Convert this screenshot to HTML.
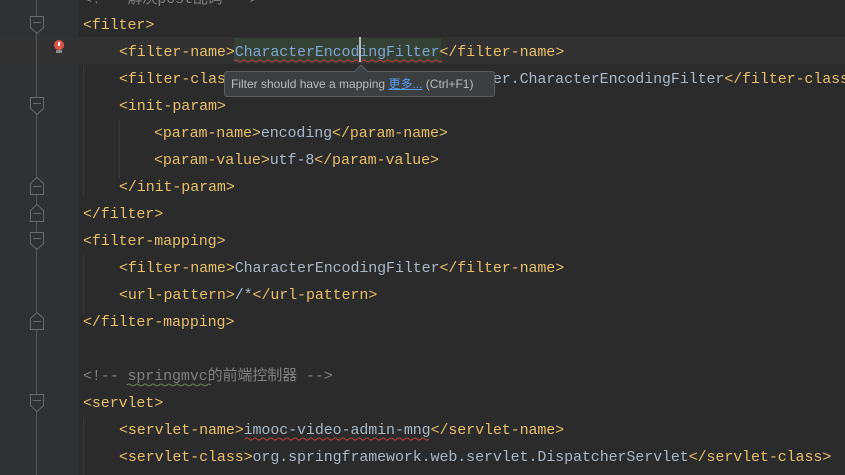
<!DOCTYPE html>
<html><head><meta charset="utf-8"><style>
body{margin:0;width:845px;height:475px;overflow:hidden;background:#2b2b2b;position:relative;font-family:"Liberation Mono","Noto Sans CJK SC",monospace;font-size:15px;letter-spacing:-0.1px;}
.gut{position:absolute;left:0;top:0;width:78px;height:475px;background:#303133;}
.cur{position:absolute;left:0;top:37px;width:845px;height:27px;background:#323232;}
.ln{position:absolute;left:0;height:27px;line-height:27px;white-space:pre;color:#e8bf6a;}
.t{color:#a9b7c6}
.c{color:#808080}
.vl{position:absolute;left:36px;top:0;width:1px;height:475px;background:#555}
.ig{position:absolute;width:1px;background:#3a3a3a}
</style></head><body>
<div class="gut"></div>
<div class="cur"></div>
<div class="vl"></div>
<div class="ig" style="left:119px;top:120px;height:58px"></div>
<div class="ig" style="left:83px;top:65px;height:130px"></div>
<div class="ig" style="left:83px;top:255px;height:60px"></div>
<div class="ig" style="left:83px;top:417px;height:58px"></div>
<svg width="845" height="475" style="position:absolute;left:0;top:0">
<g fill="#2f3032" stroke="#6a6a6a" stroke-width="1">
<path d="M30.5 16.5h13v11l-6.5 6-6.5-6z"/><line x1="33" y1="22.5" x2="41" y2="22.5"/>
<path d="M30.5 97.5h13v11l-6.5 6-6.5-6z"/><line x1="33" y1="103.5" x2="41" y2="103.5"/>
<path d="M30.5 194.5h13v-11l-6.5-6-6.5 6z"/><line x1="33" y1="186.5" x2="41" y2="186.5"/>
<path d="M30.5 221.5h13v-11l-6.5-6-6.5 6z"/><line x1="33" y1="213.5" x2="41" y2="213.5"/>
<path d="M30.5 232.5h13v11l-6.5 6-6.5-6z"/><line x1="33" y1="238.5" x2="41" y2="238.5"/>
<path d="M30.5 329.5h13v-11l-6.5-6-6.5 6z"/><line x1="33" y1="321.5" x2="41" y2="321.5"/>
<path d="M30.5 394.5h13v11l-6.5 6-6.5-6z"/><line x1="33" y1="400.5" x2="41" y2="400.5"/>
</g>
<circle cx="59" cy="45" r="5" fill="#e0554a"/><rect x="58" y="42" width="2" height="4" fill="#fff"/>
<rect x="56" y="50" width="6" height="3" fill="#888"/>
<rect x="234" y="38" width="207" height="24" fill="#344134"/>
<path d="M234 61q2-2 4 0t4 0t4 0t4 0t4 0t4 0t4 0t4 0t4 0t4 0t4 0t4 0t4 0t4 0t4 0t4 0t4 0t4 0t4 0t4 0t4 0t4 0t4 0t4 0t4 0t4 0t4 0t4 0t4 0t4 0t4 0t4 0t4 0t4 0t4 0t4 0t4 0t4 0t4 0t4 0t4 0t4 0t4 0t4 0t4 0t4 0t4 0t4 0t4 0t4 0t4 0t4 0" stroke="#bc3f3c" fill="none"/>
<path d="M127 385q2-2 4 0t4 0t4 0t4 0t4 0t4 0t4 0t4 0t4 0t4 0t4 0t4 0t4 0t4 0t4 0t4 0t4 0t4 0t4 0t4 0t4 0" stroke="#6a8759" fill="none"/>
<path d="M245 439q2-2 4 0t4 0t4 0t4 0t4 0t4 0t4 0t4 0t4 0t4 0t4 0t4 0t4 0t4 0t4 0t4 0t4 0t4 0t4 0t4 0t4 0t4 0t4 0t4 0t4 0t4 0t4 0t4 0t4 0t4 0t4 0t4 0t4 0t4 0t4 0t4 0t4 0t4 0t4 0t4 0t4 0t4 0t4 0t4 0t4 0t4 0" stroke="#bc3f3c" fill="none"/>
<rect x="359" y="37" width="2" height="25" fill="#bbb"/>
</svg>
<div class="ln c" style="top:-14px;left:83px">&lt;!-- 解决post乱码 --&gt;</div>
<div class="ln" style="top:12px;left:83px">&lt;filter&gt;</div>
<div class="ln" style="top:39px;left:119px">&lt;filter-name&gt;<span style="color:#7fa6d0">CharacterEncodingFilter</span>&lt;/filter-name&gt;</div>
<div class="ln" style="top:66px;left:119px">&lt;filter-class&gt;<span class="t">org.springframework.web.filter.CharacterEncodingFilter</span>&lt;/filter-class&gt;</div>
<div class="ln" style="top:93px;left:119px">&lt;init-param&gt;</div>
<div class="ln" style="top:120px;left:154px">&lt;param-name&gt;<span class="t">encoding</span>&lt;/param-name&gt;</div>
<div class="ln" style="top:147px;left:154px">&lt;param-value&gt;<span class="t">utf-8</span>&lt;/param-value&gt;</div>
<div class="ln" style="top:174px;left:119px">&lt;/init-param&gt;</div>
<div class="ln" style="top:201px;left:83px">&lt;/filter&gt;</div>
<div class="ln" style="top:228px;left:83px">&lt;filter-mapping&gt;</div>
<div class="ln" style="top:255px;left:119px">&lt;filter-name&gt;<span class="t">CharacterEncodingFilter</span>&lt;/filter-name&gt;</div>
<div class="ln" style="top:282px;left:119px">&lt;url-pattern&gt;<span class="t">/*</span>&lt;/url-pattern&gt;</div>
<div class="ln" style="top:309px;left:83px">&lt;/filter-mapping&gt;</div>
<div class="ln c" style="top:363px;left:83px">&lt;!-- springmvc的前端控制器 --&gt;</div>
<div class="ln" style="top:390px;left:83px">&lt;servlet&gt;</div>
<div class="ln" style="top:417px;left:119px">&lt;servlet-name&gt;<span class="t">imooc-video-admin-mng</span>&lt;/servlet-name&gt;</div>
<div class="ln" style="top:444px;left:119px">&lt;servlet-class&gt;<span class="t">org.springframework.web.servlet.DispatcherServlet</span>&lt;/servlet-class&gt;</div>
<div style="position:absolute;left:224px;top:71px;width:271px;height:26px;background:#3c3f41;border:1px solid #5b5e60;border-radius:3px;box-sizing:border-box;font-family:'Liberation Sans','Noto Sans CJK SC',sans-serif;font-size:12px;letter-spacing:0;color:#bbbbbb;line-height:24px;padding-left:6px;white-space:nowrap">Filter should have a mapping <span style="color:#589df6;text-decoration:underline">更多...</span> (Ctrl+F1)</div>
<svg width="14" height="8" style="position:absolute;left:354px;top:64px"><path d="M0 8L7 1L14 8" fill="#3c3f41" stroke="#5b5e60"/></svg>
</body></html>
